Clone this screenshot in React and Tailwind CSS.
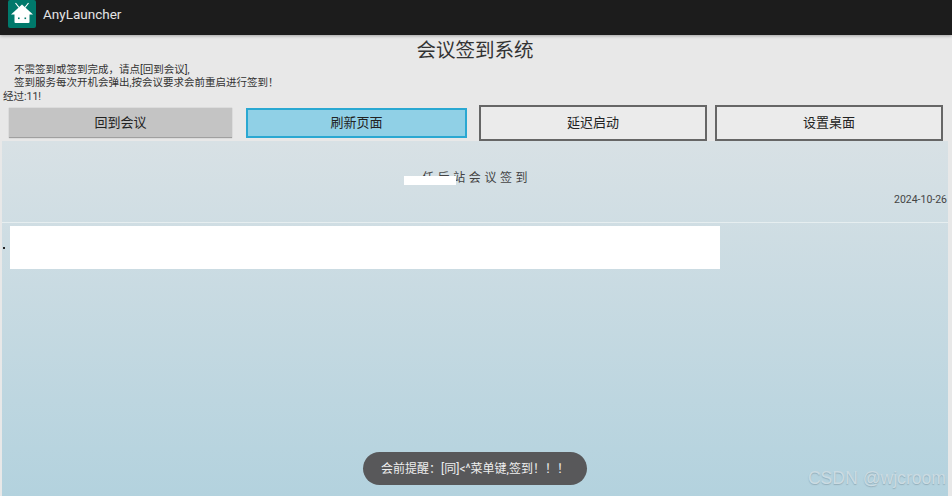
import React from 'react';

const cjk = "font-['Roboto','Noto_Sans_CJK_SC',sans-serif]";

const HouseIcon = () => (
  <svg width="28" height="28" viewBox="0 0 28 28">
    <rect width="28" height="28" rx="2" fill="#00796b" />
    <path d="M7.5 3 L11 7.5 M20.5 3 L17 7.5" stroke="#fff" strokeWidth="1.2" />
    <path d="M14 4.5 L25 14.5 L3 14.5 Z" fill="#fff" />
    <path d="M6.5 14 H21.5 V22 Q21.5 23 20.5 23 H7.5 Q6.5 23 6.5 22 Z" fill="#fff" />
    <rect x="10" y="17.5" width="1.6" height="1.6" fill="#00796b" />
    <rect x="16.5" y="17.5" width="1.6" height="1.6" fill="#00796b" />
  </svg>
);

const App = () => {
  return (
    <div className={`${cjk} relative w-[952px] h-[496px] overflow-hidden bg-[#e8e8e8] text-[#222]`}>
      {/* App bar */}
      <div className="h-[35px] bg-[#1c1c1c] flex items-start pl-[8px] gap-[7px] shadow-[0_1px_3px_rgba(0,0,0,0.3)]">
        <HouseIcon />
        <span className="text-[#e4e4e4] text-[13.5px] leading-[29px]">AnyLauncher</span>
      </div>

      {/* Title and notes */}
      <div className="h-[28px] pt-[3px] pr-[2px] flex items-center justify-center text-[19.5px] text-[#333]">会议签到系统</div>
      <div className="pl-[14px] pt-[1px] text-[10.5px] leading-[12.5px] h-[28px] text-[#333]">
        <div>不需签到或签到完成，请点[回到会议],</div>
        <div>签到服务每次开机会弹出,按会议要求会前重启进行签到！</div>
      </div>
      <div className="pl-[3px] text-[10.5px] leading-[12px] h-[14px] text-[#333]">经过:11!</div>

      {/* Buttons */}
      <div className="flex items-start h-[36px]">
        <button className="ml-[9px] w-[223px] h-[30px] mt-[3px] bg-[#c4c4c4] border-b border-[#a0a0a0] text-[13px] text-[#222] shadow-[0_0_1px_rgba(0,0,0,0.3)]">回到会议</button>
        <button className="ml-[14px] w-[221px] h-[30px] mt-[3px] bg-[#90d0e6] border-2 border-[#2aa8d2] text-[13px] text-[#222]">刷新页面</button>
        <button className="ml-[12px] w-[228px] h-[36px] bg-[#ebebeb] border-2 border-[#666] text-[13px] text-[#222]">延迟启动</button>
        <button className="ml-[8px] w-[228px] h-[36px] bg-[#ebebeb] border-2 border-[#666] text-[13px] text-[#222]">设置桌面</button>
      </div>

      {/* Page panel */}
      <div className="relative ml-[2px] w-[946px] h-[355px] bg-gradient-to-b from-[#d8e1e5] to-[#b3d2de]">
        <div className="h-[82px] border-b border-[#e6eef0] relative">
          <div className="pt-[29px] pl-[420px] text-[12px] tracking-[3.6px] leading-[16px] text-[#444]">任后站会议签到</div>
          <div className="absolute right-[1px] top-[52px] text-[10.5px] leading-[14px] text-[#444]">2024-10-26</div>
        </div>
        <div className="flex items-center h-[49px]">
          <div className="w-[8px] pl-[1px]">
            <div className="w-[2px] h-[2px] bg-[#222]" />
          </div>
          <div className="w-[710px] h-[43px] bg-white" />
        </div>
        {/* redacted block over the heading */}
        <div className="absolute left-[402px] top-[35px] w-[52px] h-[9px] bg-white" />
      </div>

      {/* Toast */}
      <div className="absolute left-[363px] top-[452px] w-[224px] h-[33px] rounded-full bg-[#58585a] text-[#eee] text-[12px] flex items-center justify-center">
        会前提醒：[同]&lt;^菜单键,签到！！！
      </div>

      {/* Watermark */}
      <div className="absolute right-[6px] top-[468px] text-[17.6px] leading-[20px] font-['Liberation_Sans',sans-serif] text-[#cbdbe2] [text-shadow:0_1px_1px_rgba(90,110,120,0.35)]">CSDN @wjcroom</div>
    </div>
  );
};

export default App;
